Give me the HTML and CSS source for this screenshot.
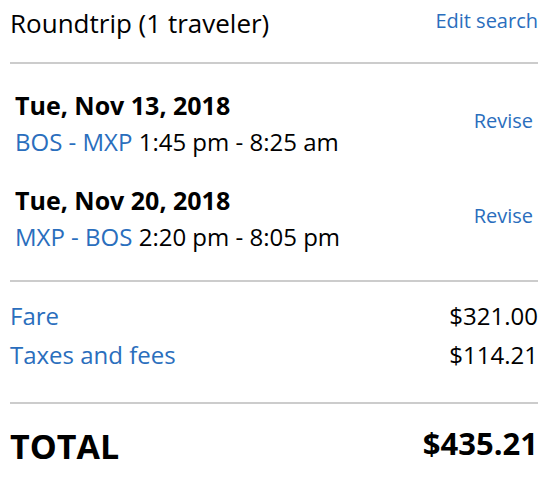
FILE: index.html
```html
<!DOCTYPE html>
<html lang="en">
<head>
<meta charset="utf-8">
<title>Trip summary</title>
<link rel="stylesheet" href="styles.css">
</head>
<body>
<div class="summary">
  <div class="header">
    <h2 class="title">Roundtrip (1 traveler)</h2>
    <a class="link edit" href="#">Edit search</a>
  </div>
  <hr class="divider divider-top">
  <div class="legs">
    <div class="leg">
      <div class="leg-info">
        <div class="date">Tue, Nov 13, 2018</div>
        <div class="route"><span class="airports">BOS - MXP</span> 1:45 pm - 8:25 am</div>
      </div>
      <a class="link revise" href="#">Revise</a>
    </div>
    <div class="leg">
      <div class="leg-info">
        <div class="date">Tue, Nov 20, 2018</div>
        <div class="route"><span class="airports">MXP - BOS</span> 2:20 pm - 8:05 pm</div>
      </div>
      <a class="link revise" href="#">Revise</a>
    </div>
  </div>
  <hr class="divider">
  <div class="costs">
    <div class="cost-row"><a class="link" href="#">Fare</a><span class="amount">$321.00</span></div>
    <div class="cost-row"><a class="link" href="#">Taxes and fees</a><span class="amount">$114.21</span></div>
  </div>
  <hr class="divider">
  <div class="total-row">
    <span class="total-label">TOTAL</span>
    <span class="total-amount">$435.21</span>
  </div>
</div>
</body>
</html>
```

FILE: styles.css
```css
html, body {
  margin: 0;
  padding: 0;
  background: #ffffff;
}
body {
  font-family: "Open Sans", "Liberation Sans", sans-serif;
  color: #000;
}
.summary {
  margin: 0 10px;
  padding-top: 5px;
}
.header {
  display: flex;
  justify-content: space-between;
  align-items: flex-start;
}
.title {
  margin: 0;
  font-size: 26px;
  font-weight: 400;
  line-height: 36px;
}
.link {
  color: #2a6ebd;
  text-decoration: none;
}
.edit {
  font-size: 20px;
  line-height: 28px;
  margin-top: 2px;
}
.divider {
  border: 0;
  height: 2px;
  background: #cccccc;
  margin: 0;
}
.divider-top {
  margin-top: 21px;
}
.legs {
  padding: 23px 5px 24px;
  display: flex;
  flex-direction: column;
  gap: 22px;
}
.leg {
  display: flex;
  justify-content: space-between;
  align-items: center;
}
.date {
  font-size: 25px;
  font-weight: 700;
  line-height: 36.7px;
}
.route {
  font-size: 24px;
  line-height: 36.7px;
}
.airports {
  color: #2a6ebd;
}
.revise {
  font-size: 20px;
  line-height: 28px;
  margin-bottom: 6px;
}
.costs {
  padding: 14px 0 28px;
}
.cost-row {
  display: flex;
  justify-content: space-between;
  font-size: 24px;
  line-height: 39px;
}
.total-row {
  display: flex;
  justify-content: space-between;
  align-items: flex-start;
  padding-top: 18px;
  font-weight: 700;
}
.total-label {
  font-size: 34px;
  line-height: 48px;
}
.total-amount {
  font-size: 31px;
  line-height: 42px;
}
```
